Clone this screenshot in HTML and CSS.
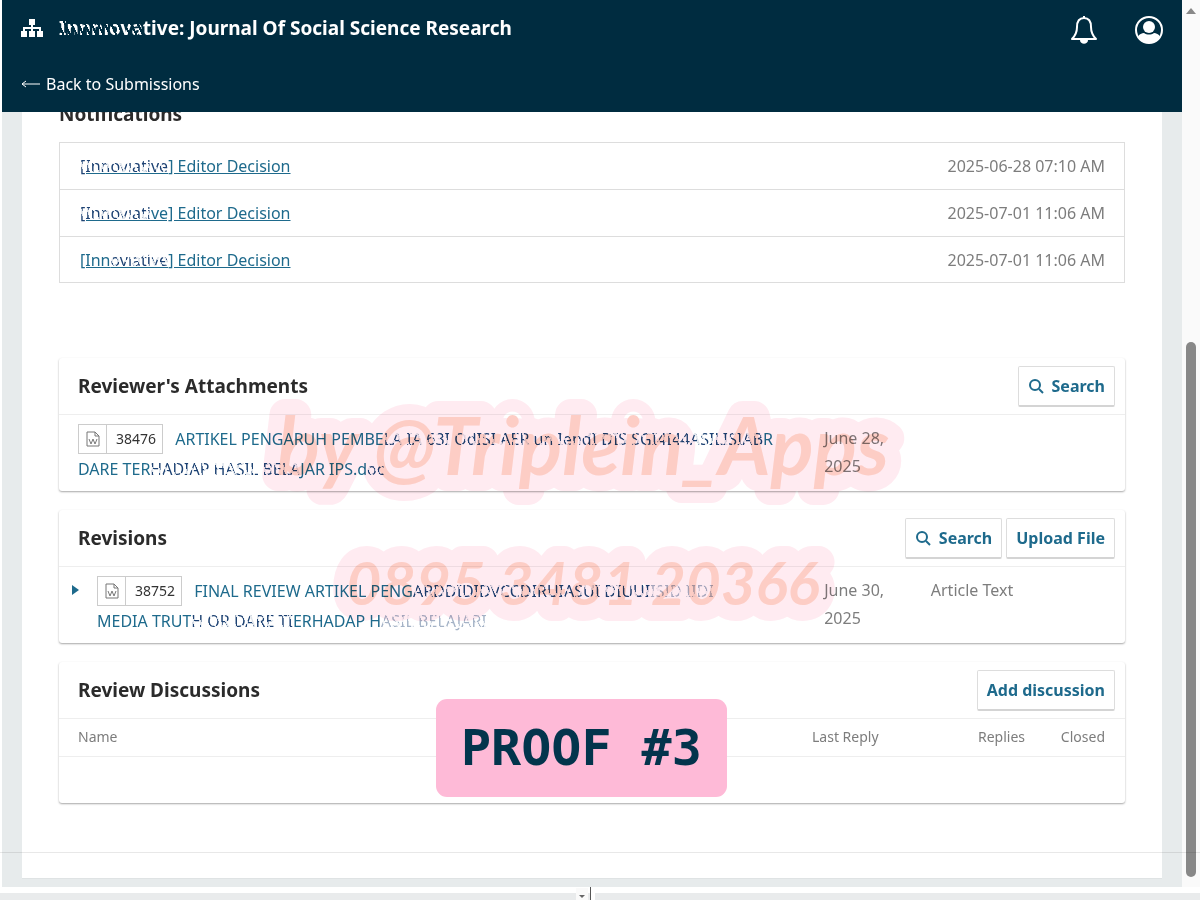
FILE: index.html
```html
<!DOCTYPE html>
<html lang="en">

<head>
    <meta charset="UTF-8">
    <meta name="viewport" content="width=device-width, initial-scale=1.0">
    <title>Journal Of Social Science Research</title>
    <link rel="stylesheet" href="styles.css">
</head>

<body>
    <div class="window">
        <div class="app">
            <header class="app-header">
                <div class="header-top">
                    <svg class="icon-site" viewBox="0 0 22 20" fill="#fff">
                        <path d="M8 1h6v6H8zM0 13h6v6H0zM8 13h6v6H8zM16 13h6v6h-6zM10 7h2v6h-2zM2 9h18v4h-2v-2H4v2H2z" />
                    </svg>
                    <h1><span class="smudge smudge-light">Innnıova</span>tive: Journal Of Social Science Research</h1>
                    <button class="icon-button" type="button" aria-label="Notifications">
                        <svg width="28" height="30" viewBox="0 0 28 30" fill="none" stroke="#fff" stroke-width="2" stroke-linejoin="round">
                            <path d="M14 3C9 3 7 7 7 12c0 6-2 9-5 12h24c-3-3-5-6-5-12 0-5-2-9-7-9z" />
                            <path d="M14 1v2" />
                            <path d="M10 25h8c0 5-8 5-8 0z" fill="#fff" stroke="none" />
                        </svg>
                    </button>
                    <button class="icon-button" type="button" aria-label="Account">
                        <svg width="30" height="30" viewBox="0 0 30 30">
                            <circle cx="15" cy="15" r="13" fill="none" stroke="#fff" stroke-width="2" />
                            <circle cx="15" cy="12" r="6" fill="#fff" />
                            <path d="M4 22c1-3 4-4 6-4 3 2 7 2 10 0 2 0 5 1 6 4-5 8-17 8-22 0z" fill="#fff" />
                        </svg>
                    </button>
                </div>
                <a class="back" href="#">
                    <svg width="19" height="10" viewBox="0 0 19 10" fill="none" stroke="#fff"><path d="M5 2L1 5l4 3M1 5h18" /></svg>
                    Back to Submissions
                </a>
            </header>

            <main class="panel">
                <h2 class="notifications-title">Notifications</h2>
                <ul class="notifications">
                    <li><a href="#"><span class="smudge">[Innovıative</span>] Editor Decision</a><time>2025-06-28 07:10 AM</time></li>
                    <li><a href="#"><span class="smudge">[Innovıati</span>ve] Editor Decision</a><time>2025-07-01 11:06 AM</time></li>
                    <li><a href="#">[Inn<span class="smudge">ovıative</span>] Editor Decision</a><time>2025-07-01 11:06 AM</time></li>
                </ul>

                <section class="card">
                    <div class="card-header">
                        <h3>Reviewer's Attachments</h3>
                        <button class="button" type="button">
                            <svg class="icon-search" viewBox="0 0 16 16"><circle cx="7" cy="7" r="5" /><path d="M11 11l4 4" /></svg>
                            Search
                        </button>
                    </div>
                    <table class="files">
                        <tr>
                            <td class="col-name">
                                <span class="file-tag">
                                    <svg viewBox="0 0 14 16"><path d="M1 1h8l4 4v10H1zM9 1v4h4" /><path d="M3 8l2 5 2-5 2 5 2-5" /></svg>
                                    <span>38476</span>
                                </span>
                                <a href="#">ARTIKEL PENGARUH PEMBE<span class="smudge">LA IA 63I OdISI AER un IendI DIS SGI4I44ASILISIAB</span>R<br>DARE TER<span class="smudge">HADIAP HASIL</span> <span class="smudge">BELA</span>JAR IPS.d<span class="smudge">oc</span></a>
                            </td>
                            <td class="col-date">June 28, 2025</td>
                            <td></td>
                        </tr>
                    </table>
                </section>

                <section class="card">
                    <div class="card-header">
                        <h3>Revisions</h3>
                        <button class="button" type="button">
                            <svg class="icon-search" viewBox="0 0 16 16"><circle cx="7" cy="7" r="5" /><path d="M11 11l4 4" /></svg>
                            Search
                        </button>
                        <button class="button" type="button">Upload File</button>
                    </div>
                    <table class="files">
                        <tr>
                            <td class="col-name expandable">
                                <span class="file-tag">
                                    <svg viewBox="0 0 14 16"><path d="M1 1h8l4 4v10H1zM9 1v4h4" /><path d="M3 8l2 5 2-5 2 5 2-5" /></svg>
                                    <span>38752</span>
                                </span>
                                <a href="#">FINAL REVIEW ARTIKEL PENG<span class="smudge">ARDDIDIDVCCDIRUIASUI DIUUI</span><span class="smudge smudge-faint">ISID IIDI</span><br>MEDIA TRUT<span class="smudge">H OR DARE TI</span>ERHADAP H<span class="smudge smudge-faint">ASIL BELAJARI</span></a>
                            </td>
                            <td class="col-date">June 30, 2025</td>
                            <td>Article Text</td>
                        </tr>
                    </table>
                </section>

                <section class="card">
                    <div class="card-header">
                        <h3>Review Discussions</h3>
                        <button class="button" type="button">Add discussion</button>
                    </div>
                    <table class="discussions">
                        <thead>
                            <tr>
                                <th>Name</th>
                                <th class="col-last">Last Reply</th>
                                <th class="col-replies">Replies</th>
                                <th class="col-closed">Closed</th>
                            </tr>
                        </thead>
                        <tbody>
                            <tr><td colspan="4"></td></tr>
                        </tbody>
                    </table>
                </section>
            </main>
        </div>

        <div class="scrollbar">
            <span class="scroll-up"></span>
            <span class="scroll-thumb"></span>
        </div>
    </div>

    <div class="bottom-bar">
        <span class="bottom-arrow"></span>
        <span class="bottom-divider"></span>
    </div>

    <div class="seam"></div>

    <svg class="watermark" viewBox="0 0 700 290">
        <text x="350" y="118" class="handle">by @Triplein_Apps</text>
        <text x="350" y="248" class="phone">0895 3481 20366</text>
    </svg>

    <div class="proof">PROOF #3</div>
</body>

</html>
```

FILE: styles.css
```css
* {
    box-sizing: border-box;
}

body {
    margin: 0;
    min-height: 100vh;
    display: flex;
    flex-direction: column;
    position: relative;
    overflow: hidden;
    background: #fff;
    color: #2b2b2b;
    font-family: "Noto Sans", sans-serif;
    font-size: 16px;
    line-height: 28px;
}

h1,
h2,
h3,
ul {
    margin: 0;
    padding: 0;
}

a {
    color: #1e6a8c;
}

.window {
    flex: 1;
    display: flex;
    padding-left: 2px;
}

.app {
    flex: 1;
    display: flex;
    flex-direction: column;
    background: #e7ebec;
    padding-bottom: 8px;
}

/* header */
.app-header {
    position: relative;
    z-index: 1;
    height: 112px;
    padding: 0 18px 0 19px;
    background: #002c40;
    color: #fff;
}

.header-top {
    display: flex;
    align-items: center;
    height: 56px;
}

.icon-site {
    width: 22px;
    height: 20px;
    margin: 0 16px 0 0;
}

h1 {
    flex: 1;
    font-size: 19px;
    line-height: 28px;
}

.icon-button {
    display: flex;
    margin-left: 36px;
    padding: 4px 0 0;
    border: 0;
    background: none;
}

.back {
    display: flex;
    align-items: center;
    gap: 6px;
    height: 56px;
    color: #fff;
    text-decoration: none;
}

/* panel */
.panel {
    flex: 1;
    margin: 0 20px;
    padding: 0 37px;
    background: #fff;
    border-bottom: 1px solid #dfe3e4;
}

.notifications-title {
    margin-top: -12px;
    padding-bottom: 14px;
    font-size: 19px;
    line-height: 28px;
}

.notifications {
    margin-bottom: 75px;
    list-style: none;
    border: 1px solid #ddd;
}

.notifications li {
    display: flex;
    justify-content: space-between;
    padding: 9px 19px 9px 20px;
    border-bottom: 1px solid #ddd;
}

.notifications li:last-child {
    padding-bottom: 8px;
    border-bottom: 0;
}

.notifications time {
    color: #7d7d7d;
}

/* cards */
.card {
    margin-bottom: 19px;
    border-radius: 3px;
    box-shadow: 0 1px 2px rgba(0, 0, 0, 0.35);
}

.card-header {
    display: flex;
    align-items: center;
    gap: 4px;
    height: 57px;
    padding: 0 10px 0 19px;
    border-bottom: 1px solid #eee;
}

.card-header h3 {
    flex: 1;
    font-size: 19px;
}

.button {
    display: flex;
    align-items: center;
    gap: 8px;
    height: 41px;
    padding: 0 9px;
    background: #fff;
    border: 1px solid #ddd;
    border-bottom: 2px solid #d4d4d4;
    border-radius: 2px;
    color: #1e6a8c;
    font: bold 16px "Noto Sans", sans-serif;
}

.icon-search {
    width: 16px;
    height: 16px;
    fill: none;
    stroke: #1e6a8c;
    stroke-width: 2;
}

table {
    width: 100%;
    border-collapse: collapse;
    table-layout: fixed;
}

.files td {
    height: 76px;
    padding: 9px 19px 7px;
    vertical-align: top;
    color: #7d7d7d;
}

.files a {
    text-decoration: none;
}

.files .col-name {
    width: 70%;
    padding-right: 0;
    line-height: 30px;
}

.files .col-date {
    width: 10%;
}

.files .expandable {
    position: relative;
    padding-left: 38px;
}

.expandable::before {
    content: "";
    position: absolute;
    left: 13px;
    top: 18px;
    border: 5px solid transparent;
    border-left: 7px solid #1e6a8c;
    border-right: 0;
}

.file-tag {
    display: inline-flex;
    align-items: center;
    height: 30px;
    margin-right: 8px;
    border: 1px solid #ccc;
    color: #333;
    font-size: 14px;
    line-height: 28px;
    vertical-align: top;
}

.file-tag svg {
    width: 14px;
    height: 16px;
    margin: 0 6px 0 7px;
    fill: none;
    stroke: #777;
}

.file-tag span {
    padding: 0 6px 0 9px;
    border-left: 1px solid #ccc;
}

/* discussions */
.discussions th {
    height: 37px;
    padding: 0 20px 0 0;
    border-bottom: 1px solid #eee;
    color: #7d7d7d;
    font-size: 14px;
    font-weight: normal;
    text-align: left;
}

.discussions th:first-child {
    padding-left: 19px;
}

.discussions td {
    height: 47px;
    padding: 0;
}

.discussions .col-last {
    width: 133px;
}

.discussions .col-replies {
    width: 100px;
    text-align: right;
}

.discussions .col-closed {
    width: 80px;
    text-align: right;
}

/* scribbled-out names */
.smudge {
    position: relative;
    color: #1d4273;
}

.smudge::after {
    content: "";
    position: absolute;
    inset: 3px 0 4px;
    background: repeating-linear-gradient(65deg, transparent 0 4px, rgba(255, 255, 255, 0.85) 4px 6px);
}

.smudge-light {
    color: #fff;
}

.smudge-light::after {
    background: repeating-linear-gradient(65deg, transparent 0 4px, #002c40 4px 6px);
}

.smudge-faint {
    opacity: 0.4;
}

/* scrollbar */
.scrollbar {
    display: flex;
    flex-direction: column;
    align-items: center;
    justify-content: space-between;
    width: 18px;
    padding: 8px 0 10px;
    background: #fafafa;
}

.scroll-up {
    border: 5px solid transparent;
    border-bottom: 6px solid #888;
    border-top: 0;
}

.scroll-thumb {
    width: 10px;
    height: 535px;
    border-radius: 5px;
    background: #888;
}

.bottom-bar {
    display: flex;
    justify-content: center;
    align-items: flex-end;
    gap: 2px;
    height: 13px;
    padding-right: 30px;
    background: linear-gradient(#fff 6px, #e9ebec 6px);
}

.bottom-arrow {
    width: 12px;
    height: 12px;
    background: #fafafa;
}

.bottom-arrow::before {
    content: "";
    display: block;
    width: 0;
    margin: 7px auto 0;
    border: 3px solid transparent;
    border-top: 3px solid #666;
    border-bottom: 0;
}

.bottom-divider {
    width: 5px;
    height: 13px;
    border-left: 1px solid #555;
    background: #fff;
}

/* overlays */
.seam {
    position: absolute;
    top: 852px;
    left: 0;
    right: 0;
    height: 1px;
    background: rgba(0, 0, 0, 0.09);
}

.watermark {
    position: absolute;
    top: 357px;
    left: calc(50% - 367px);
    width: 700px;
    height: 290px;
    font-family: Lato, sans-serif;
    font-style: italic;
    font-weight: bold;
    text-anchor: middle;
    mix-blend-mode: multiply;
    pointer-events: none;
}

.watermark text {
    fill: #fdcdc5;
    stroke: #ffebf1;
    stroke-width: 32px;
    stroke-linejoin: round;
    paint-order: stroke;
}

.handle {
    font-size: 80px;
}

.phone {
    font-size: 60px;
}

.proof {
    position: absolute;
    top: 699px;
    left: calc(50% - 164px);
    padding: 20px 25px;
    border-radius: 11px;
    background: #febad7;
    color: #03344c;
    font: bold 50px/58px "DejaVu Sans Mono", monospace;
}
```
